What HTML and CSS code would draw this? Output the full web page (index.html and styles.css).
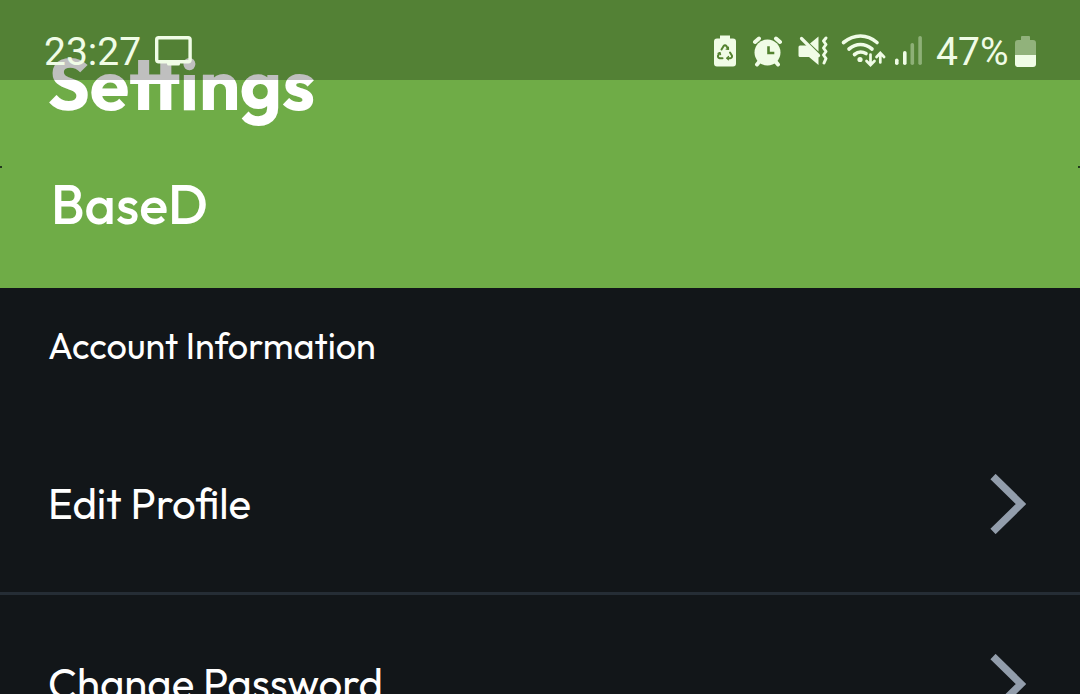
FILE: index.html
```html
<!DOCTYPE html>
<html lang="en">
<head>
<meta charset="utf-8">
<title>Settings</title>
<link rel="stylesheet" href="styles.css">
</head>
<body>
<div class="screen">
  <header class="hero">
    <h1 class="title"><span>Settings</span></h1>
    <p class="username"><span>BaseD</span></p>
  </header>
  <main class="content">
    <h2 class="section-title"><span>Account Information</span></h2>
    <div class="row">
      <span class="row-label">Edit Profile</span>
      <svg class="chevron" width="36" height="60" viewBox="0 0 36 60"><path d="M3 2.500 31 30 3 57.500"/></svg>
    </div>
    <div class="row">
      <span class="row-label">Change Password</span>
      <svg class="chevron" width="36" height="60" viewBox="0 0 36 60"><path d="M3 2.500 31 30 3 57.500"/></svg>
    </div>
  </main>
  <i class="corner corner-left"></i>
  <i class="corner corner-right"></i>
  <div class="status-bar">
    <div class="status-left">
      <span class="clock">23:27</span>
      <svg class="cast" width="37" height="30" viewBox="0 0 37 30"><rect x="1.700" y="1.700" width="33.400" height="24" rx="2" fill="none" stroke="#f0fce6" stroke-width="3.400"/><path d="M12 25h13v3q0 1.500-1.500 1.500h-10Q12 29.500 12 28z"/></svg>
    </div>
    <div class="status-right">
      <svg width="170" height="36" viewBox="713 33 170 36" class="tray">
        <path d="M720 35.500h10v3h3q3 0 3 3v22q0 3-3 3h-16q-3 0-3-3v-22q0-3 3-3h3z"/>
        <g fill="none" stroke="#53822f" stroke-width="2" stroke-linecap="round" stroke-linejoin="round">
          <path d="M721.500 49.500l2-3.300q1.500-1.800 3 0l1.700 2.800M730 52.500l2 3.300q.3 2.200-1.800 2.400h-3M722.500 58.200h-2.800q-2.100-.4-1.700-2.400l1.500-2.800"/>
          <path d="M728.400 47v2.200h-2.200M728.500 56.500l-1.500 1.700 1.500 1.700M718 53.300l2-.6.6 2" stroke-width="1.200"/>
        </g>
        <circle cx="767.500" cy="52.500" r="13"/>
        <g fill="none" stroke="#f0fce6" stroke-width="4" stroke-linecap="round">
          <path d="M755 42l4-3.500M776 38.500l4 3.500M759.500 61.500l-2.500 3M775.500 61.500l2.500 3"/>
        </g>
        <path d="M768.500 47.500v5.500h4.500" fill="none" stroke="#53822f" stroke-width="2.600" stroke-linecap="square"/>
        <path d="M800 45.500h7l11.500 11v8.500l-9.500-8h-9q-1.500 0-1.500-1.500v-8.500q0-1.500 1.500-1.500zM810 43.500l8.500-7v15z"/>
        <path d="M801.500 38.500l17 17" fill="none" stroke="#f0fce6" stroke-width="3.200" stroke-linecap="round"/>
        <path d="M826 38l-2.500 3 2.500 3.500-2.500 3.500 2.500 3.500-2.500 3.500 2.500 3.500-2 4.500" fill="none" stroke="#f0fce6" stroke-width="3" stroke-linecap="round" stroke-linejoin="round"/>
        <g fill="none" stroke="#f0fce6" stroke-width="3.600" stroke-linecap="round">
          <path d="M843.500 42.500q8-6.500 17-6.500t16.500 6.500M849 49q5.500-4.500 11.500-4.500t11.500 4.500M854.500 54.500q3-2.500 6-2.500t5.500 1.500"/>
        </g>
        <circle cx="860" cy="59.500" r="2.600"/>
        <path d="M870.500 54.500v10M866.500 61l4 4 4-4" fill="none" stroke="#f0fce6" stroke-width="2.700" stroke-linecap="round"/>
      </svg>
      <svg width="49" height="36" viewBox="874 33 49 36" class="signal">
        <path d="M880.300 62.500V53.500M876.500 57l3.800-4 3.800 4" fill="none" stroke="#f0fce6" stroke-width="2.700" stroke-linecap="round"/>
        <rect x="895" y="58.500" width="3.600" height="6.500" rx="1.800"/><rect x="903" y="51" width="3.600" height="14" rx="1.800"/>
        <rect x="910.500" y="43" width="3.600" height="22" rx="1.800" opacity=".38"/><rect x="918.300" y="36" width="3.600" height="29" rx="1.800" opacity=".38"/>
      </svg>
      <span class="percent">47%</span>
      <svg width="22" height="32" viewBox="0 0 22 32"><path d="M6 1q0-1 1-1h7q1 0 1 1v3h3q3 0 3 3v12H0V7q0-3 3-3h3z" opacity=".4"/><path d="M0 19h21v9q0 3-3 3H3q-3 0-3-3z"/></svg>
    </div>
  </div>
</div>
</body>
</html>
```
FILE: styles.css
```css
* { box-sizing: border-box; }
body { margin: 0; background: #121619; }
.screen {
  position: relative;
  width: 1080px;
  height: 694px;
  overflow: hidden;
  background: #121619;
  color: #fff;
  font-family: Outfit, Lato, sans-serif;
}
.hero { height: 288px; padding: 44px 48px 0; background: #6fac47; }
.title { margin: 0; font-size: 72px; line-height: 80px; font-weight: 700; }
.username { margin: 48px 0 0 3px; font-size: 54px; line-height: 64px; font-weight: 500; }
.content { padding-top: 36px; }
.section-title { margin: 0 48px 46px; font-size: 36px; line-height: 44px; font-weight: 400; }
.row {
  display: flex;
  align-items: center;
  justify-content: space-between;
  height: 181px;
  padding: 1px 54px 0 48px;
  border-bottom: 3px solid #252d35;
}
.row:last-of-type { height: 180px; }
.row-label { font-size: 42px; line-height: 52px; white-space: nowrap; }
.chevron { fill: none; stroke: #929dab; stroke-width: 7.4; }
.status-bar {
  position: absolute;
  inset: 0 0 auto;
  height: 80px;
  display: flex;
  justify-content: space-between;
  padding: 33px 43px 0 44px;
  background: rgba(0, 0, 0, .25);
  color: #f0fce6;
  font: 400 39px/38px Roboto, sans-serif;
}
.status-bar svg { fill: #f0fce6; flex: none; }
.status-left, .status-right { display: flex; align-items: flex-start; height: 36px; }
.cast { margin: 3px 0 0 14px; }
.percent { margin: 0 6.5px 0 13.5px; }
.status-right > svg:last-child { margin-top: 3px; }
.tray { margin-right: -9px; }
.corner { position: absolute; top: 166px; width: 2px; height: 2px; background: #20391c; }
.corner-left { left: 0; }
.corner-right { right: 0; }
```
